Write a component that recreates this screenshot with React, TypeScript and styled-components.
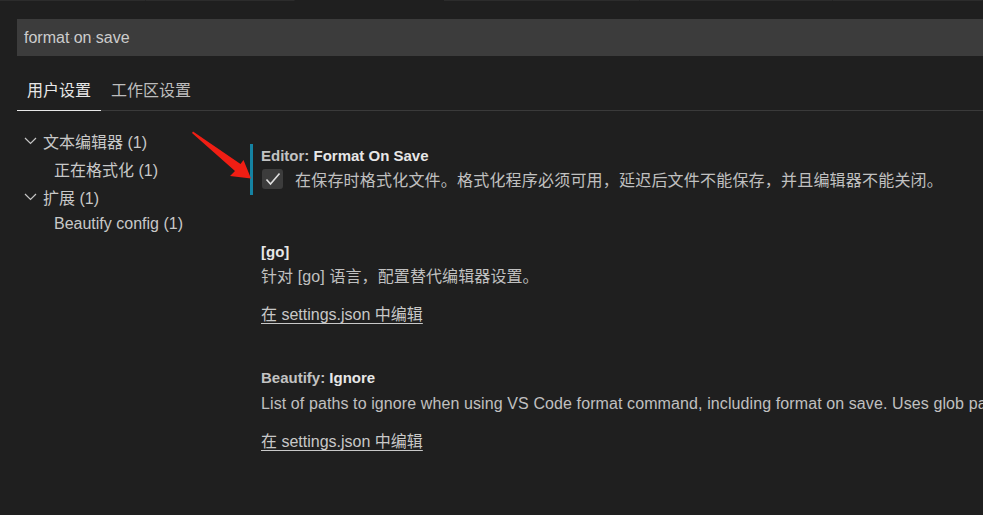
import React from "react";
import styled, { createGlobalStyle } from "styled-components";

const Global = createGlobalStyle`
  html, body { margin: 0; padding: 0; background: #1f1f1f; overflow: hidden; }
  body { font-family: "Liberation Sans", "Noto Sans CJK SC", sans-serif; color: #cccccc; }
`;

const Page = styled.div`
  position: relative;
  width: 983px;
  height: 515px;
  background: #1f1f1f;
  overflow: hidden;
`;

const TabStrip = styled.div`
  display: flex;
  height: 2px;
`;

const StripSeg = styled.div<{ $w: number; $on?: boolean }>`
  width: ${(p) => p.$w}px;
  flex: none;
  box-sizing: border-box;
  border-top: 1px solid ${(p) => (p.$on ? "#2c2c2c" : "#1f1f1f")};
  border-right: 1px solid #1f1f1f;
`;

const SearchBox = styled.div`
  margin: 17px 0 0 17px;
  height: 37px;
  background: #3c3c3c;
  display: flex;
  align-items: center;
  padding-left: 7px;
  padding-top: 1px;
  box-sizing: border-box;
  font-size: 16px;
  color: #cccccc;
`;

const Ws = styled.span`
  color: #6a6a6a;
  font-size: 10px;
  margin: 0 0.5px;
`;

const TabsBar = styled.div`
  margin: 19px 0 0 17px;
  height: 35px;
  display: flex;
  border-bottom: 1px solid #3a3a3a;
`;

const TabItem = styled.div<{ $active?: boolean }>`
  padding: 0 10px 7px;
  display: flex;
  align-items: center;
  font-size: 16px;
  color: ${(p) => (p.$active ? "#e7e7e7" : "#bdbdbd")};
  margin-bottom: -1px;
  border-bottom: 1px solid ${(p) => (p.$active ? "#e7e7e7" : "transparent")};
`;

const Body = styled.div`
  display: flex;
  padding-top: 16px;
`;

const Tree = styled.div`
  width: 250px;
  flex: none;
  display: flex;
  flex-direction: column;
`;

const TreeRow = styled.div<{ $indent: number; $h: number }>`
  height: ${(p) => p.$h}px;
  display: flex;
  align-items: center;
  padding-left: ${(p) => p.$indent}px;
  font-size: 16px;
  color: #c8c8c8;
  white-space: nowrap;
`;

const Chevron = styled.svg`
  width: 13px;
  height: 8px;
  margin-right: 6px;
  flex: none;
`;

const Content = styled.div`
  flex: 1;
  display: flex;
  flex-direction: column;
  min-width: 0;
  padding-top: 17px;
`;

const Setting = styled.div<{ $focused?: boolean; $mt: number }>`
  margin-top: ${(p) => p.$mt}px;
  padding-left: ${(p) => (p.$focused ? 8 : 11)}px;
  border-left: ${(p) => (p.$focused ? "3px solid #1583a3" : "none")};
  display: flex;
  flex-direction: column;
  white-space: nowrap;
`;

const Title = styled.div`
  height: 22px;
  display: flex;
  align-items: center;
  font-size: 15px;
  color: #c2c2c2;
  font-weight: 600;
`;

const TitleStrong = styled.span`
  color: #e7e7e7;
  font-weight: 700;
`;

const Desc = styled.div<{ $latin?: boolean }>`
  height: 26px;
  display: flex;
  align-items: center;
  font-size: 16px;
  color: #c0c0c0;
  letter-spacing: 0.1px;
  padding-top: ${(p) => (p.$latin ? 5 : 0)}px;
  box-sizing: border-box;
`;

const CheckRow = styled.div`
  height: 28px;
  display: flex;
  align-items: center;
  font-size: 16px;
  color: #c0c0c0;
  letter-spacing: 0.2px;
  margin-top: -1px;
  padding-bottom: 2px;
`;

const CheckBox = styled.div`
  width: 21px;
  height: 20px;
  border-radius: 3px;
  background: #3c3c3c;
  display: flex;
  align-items: center;
  justify-content: center;
  margin: 0 12px 0 1px;
  flex: none;
`;

const EditLink = styled.a<{ $mt: number }>`
  margin-top: ${(p) => p.$mt}px;
  height: 24px;
  display: flex;
  align-items: center;
  font-size: 16px;
  color: #c8c8c8;
  text-decoration: underline;
  text-underline-offset: 3px;
  align-self: flex-start;
`;

const Arrow = styled.svg`
  position: absolute;
  left: 185px;
  top: 125px;
  width: 75px;
  height: 65px;
  pointer-events: none;
`;

const ChevronIcon = () => (
  <Chevron viewBox="0 0 13 8">
    <polyline points="1,1 6.5,6.5 12,1" fill="none" stroke="#c5c5c5" strokeWidth="1.2" />
  </Chevron>
);

export default function App() {
  return (
    <Page>
      <Global />
      <TabStrip>
        <StripSeg $w={146} $on />
        <StripSeg $w={149} $on />
        <StripSeg $w={149} />
        <StripSeg $w={196} $on />
        <StripSeg $w={193} $on />
        <StripSeg $w={150} $on />
      </TabStrip>
      <SearchBox>
        format<Ws>·</Ws>on<Ws>·</Ws>save
      </SearchBox>
      <TabsBar>
        <TabItem $active>用户设置</TabItem>
        <TabItem>工作区设置</TabItem>
      </TabsBar>
      <Body>
        <Tree>
          <TreeRow $indent={24} $h={28}>
            <ChevronIcon />文本编辑器 (1)
          </TreeRow>
          <TreeRow $indent={54} $h={28}>正在格式化 (1)</TreeRow>
          <TreeRow $indent={24} $h={27}>
            <ChevronIcon />扩展 (1)
          </TreeRow>
          <TreeRow $indent={54} $h={27}>Beautify config (1)</TreeRow>
        </Tree>
        <Content>
          <Setting $focused $mt={0}>
            <Title>
              Editor:&nbsp;<TitleStrong>Format On Save</TitleStrong>
            </Title>
            <CheckRow>
              <CheckBox>
                <svg width="16" height="14" viewBox="0 0 16 14">
                  <polyline points="1.5,7.5 5.5,12 14.5,1.5" fill="none" stroke="#e0e0e0" strokeWidth="1.6" />
                </svg>
              </CheckBox>
              在保存时格式化文件。格式化程序必须可用，延迟后文件不能保存，并且编辑器不能关闭。
            </CheckRow>
          </Setting>
          <Setting $mt={45}>
            <Title>
              <TitleStrong>[go]</TitleStrong>
            </Title>
            <Desc>针对 [go] 语言，配置替代编辑器设置。</Desc>
            <EditLink $mt={13}>在 settings.json 中编辑</EditLink>
          </Setting>
          <Setting $mt={41}>
            <Title>
              Beautify:&nbsp;<TitleStrong>Ignore</TitleStrong>
            </Title>
            <Desc $latin>
              List of paths to ignore when using VS Code format command, including format on save. Uses glob patterns.
            </Desc>
            <EditLink $mt={14}>在 settings.json 中编辑</EditLink>
          </Setting>
        </Content>
      </Body>
      <Arrow viewBox="0 0 75 65">
        <polygon points="8,6.5 55.5,39 58.5,35 66,53.5 45,51 50,46 7,8" fill="#f01e14" strokeLinejoin="round" />
      </Arrow>
    </Page>
  );
}
